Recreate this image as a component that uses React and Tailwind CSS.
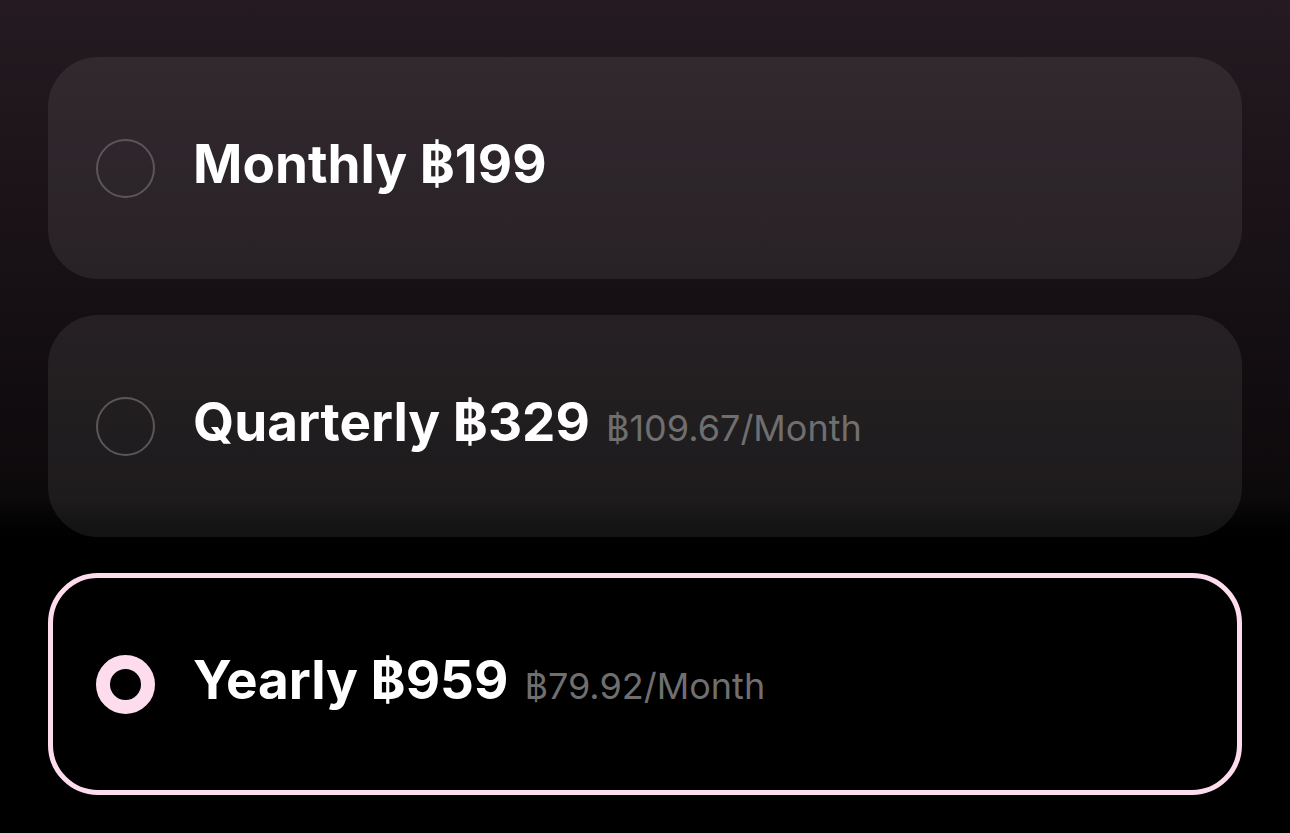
import React from 'react';

const plans = [
  { name: 'Monthly', price: '฿199', perMonth: null, selected: false },
  { name: 'Quarterly', price: '฿329', perMonth: '฿109.67/Month', selected: false },
  { name: 'Yearly', price: '฿959', perMonth: '฿79.92/Month', selected: true },
];

const Radio = ({ selected }) =>
  selected ? (
    <div className="w-[59px] h-[59px] shrink-0 rounded-full border-[14px] border-[#fddcee] bg-black" />
  ) : (
    <div className="w-[59px] h-[59px] shrink-0 rounded-full border-2 border-[#5c565a]" />
  );

const App = () => {
  return (
    <main className="min-h-screen w-full bg-gradient-to-b from-[#251a21] via-[#0c090b] via-60% to-black to-68% font-['Inter','Liberation_Sans',sans-serif] px-12 pt-[57px] pb-10">
      <div className="flex flex-col gap-9">
        {plans.map((plan) => (
          <div
            key={plan.name}
            className={
              plan.selected
                ? 'h-[222px] rounded-[50px] border-[5px] border-[#fddcee] bg-black flex items-center pl-[43px] gap-[38px]'
                : 'h-[222px] rounded-[50px] bg-white/[0.075] flex items-center pl-12 gap-[38px]'
            }
          >
            <Radio selected={plan.selected} />
            <div className="flex items-baseline gap-4 pb-[6px]">
              <span className="text-[53px] font-bold text-white">
                {plan.name} {plan.price}
              </span>
              {plan.perMonth && (
                <span className="text-[36px] text-[#6f6f70]">{plan.perMonth}</span>
              )}
            </div>
          </div>
        ))}
      </div>
    </main>
  );
};

export default App;
